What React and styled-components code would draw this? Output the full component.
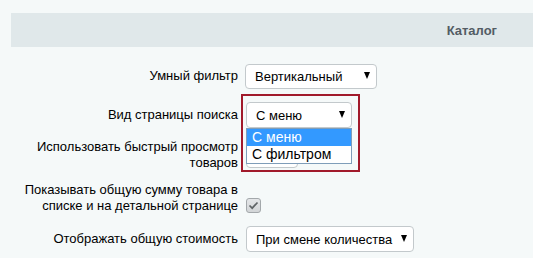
import React from "react";
import styled, { createGlobalStyle } from "styled-components";

const GlobalStyle = createGlobalStyle`
  html, body {
    margin: 0;
    padding: 0;
    background: #f5f9f9;
  }
  body {
    font-family: "Liberation Sans", Arial, sans-serif;
    font-size: 13px;
    color: #000;
    overflow: hidden;
  }
`;

const Page = styled.div`
  padding: 13px 0 0 11px;
  width: 522px;
  height: 245px;
`;

const Header = styled.div`
  height: 34px;
  background: #e0e8ea;
  display: flex;
  align-items: center;
  justify-content: flex-end;
  padding-right: 36px;
  font-weight: 700;
  font-size: 13px;
  color: #535c64;
`;

const Form = styled.div`
  padding-top: 9px;
  display: flex;
  flex-direction: column;
`;

const Row = styled.div`
  display: grid;
  grid-template-columns: 227px 1fr;
  column-gap: 8px;
  align-items: center;
  height: ${(p) => p.$h}px;
`;

const Label = styled.div`
  text-align: right;
  line-height: 16px;
  padding-left: 10px;
`;

const Control = styled.div`
  position: relative;
  display: flex;
  align-items: center;
  margin-top: ${(p) => p.$shift || 0}px;
`;

const Select = styled.div`
  box-sizing: border-box;
  width: ${(p) => p.$w}px;
  height: ${(p) => p.$hh || 26}px;
  margin-left: ${(p) => p.$ml || 0}px;
  background: #fff;
  border: 1px solid #c3c9cc;
  border-radius: 4px;
  display: flex;
  align-items: center;
  justify-content: space-between;
  padding: 0 6px 0 9px;
  white-space: nowrap;
  overflow: hidden;
`;

const Arrow = styled.span`
  width: 0;
  height: 0;
  border-left: 3.5px solid transparent;
  border-right: 3.5px solid transparent;
  border-top: 7px solid #000;
  margin-bottom: 2px;
`;

const Highlight = styled.div`
  position: absolute;
  left: -5px;
  top: -8px;
  width: 119px;
  height: 78px;
  box-sizing: border-box;
  border: 2px solid #a11a2b;
  pointer-events: none;
`;

const Dropdown = styled.ul`
  position: absolute;
  left: 0;
  top: 26px;
  width: 106px;
  box-sizing: border-box;
  margin: 0;
  padding: 0;
  list-style: none;
  background: #fff;
  border: 1px solid #7f9db9;
  z-index: 3;
`;

const Option = styled.li`
  height: 17px;
  line-height: 17px;
  padding-left: 5px;
  font-size: 14px;
  background: ${(p) => (p.$active ? "#3399ff" : "#fff")};
  color: ${(p) => (p.$active ? "#fff" : "#000")};
`;

const Check = styled.span`
  box-sizing: border-box;
  width: 15px;
  height: 15px;
  border: 1px solid #a3a8ab;
  border-radius: 3px;
  background: linear-gradient(#e4e6e8, #d2d5d7);
  display: flex;
  align-items: center;
  justify-content: center;
`;

const App = () => {
  return (
    <>
      <GlobalStyle />
      <Page>
        <Header>Каталог</Header>
        <Form>
          <Row $h={40}>
            <Label>Умный фильтр</Label>
            <Control>
              <Select $w={132} $hh={25} $ml={-1}>
                Вертикальный <Arrow />
              </Select>
            </Control>
          </Row>
          <Row $h={38}>
            <Label>Вид страницы поиска</Label>
            <Control>
              <Select $w={106}>
                С меню <Arrow />
              </Select>
              <Dropdown>
                <Option $active>С меню</Option>
                <Option>С фильтром</Option>
              </Dropdown>
              <Highlight />
            </Control>
          </Row>
          <Row $h={42}>
            <Label>Использовать быстрый просмотр товаров</Label>
            <Control>
              <Select $w={52} />
            </Control>
          </Row>
          <Row $h={44}>
            <Label>Показывать общую сумму товара в списке и на детальной странице</Label>
            <Control $shift={14}>
              <Check>
                <svg width="11" height="9" viewBox="0 0 11 9">
                  <path d="M1.5 4.5 L4.2 7.2 L9.5 1.5" fill="none" stroke="#5f6466" strokeWidth="1.7" />
                </svg>
              </Check>
            </Control>
          </Row>
          <Row $h={38}>
            <Label>Отображать общую стоимость</Label>
            <Control>
              <Select $w={168}>
                При смене количества <Arrow />
              </Select>
            </Control>
          </Row>
        </Form>
      </Page>
    </>
  );
};

export default App;
